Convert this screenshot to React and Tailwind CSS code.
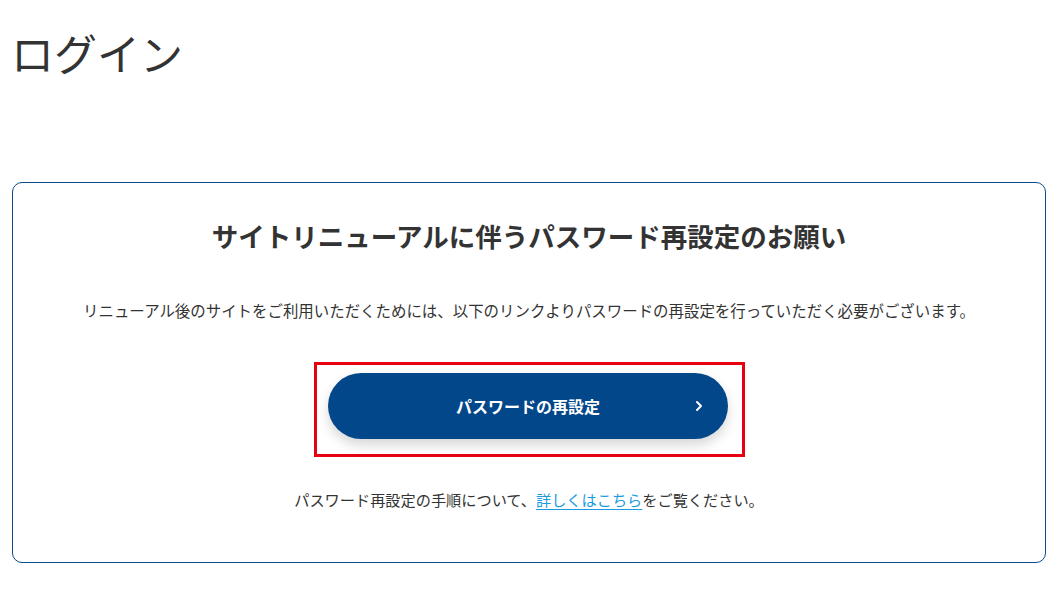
export default function App() {
  const font = { fontFamily: '"Noto Sans CJK JP", "Noto Sans", sans-serif' };
  return (
    <div className="w-[1058px] h-[599px] bg-white text-[#333333] overflow-hidden" style={font}>
      <div className="px-3">
        <h1 className="pt-[19px] pb-[3px] -ml-[1px] text-[43px] leading-[66px] font-normal">ログイン</h1>
        <div className="mt-[94px] h-[381px] border border-[#0b4a8b] rounded-[10px] flex flex-col items-center">
          <h2 className="mt-[33px] text-[26.5px] leading-[39px] font-bold">サイトリニューアルに伴うパスワード再設定のお願い</h2>
          <p className="mt-[43px] text-[15.45px] leading-[24px]">リニューアル後のサイトをご利用いただくためには、以下のリンクよりパスワードの再設定を行っていただく必要がございます。</p>
          <div className="mt-[40px] ml-[1px] w-[431px] h-[95px] border-[3px] border-[#e60012] pl-[11px] pt-[8px]">
            <button className="relative w-[400px] h-[66px] rounded-full bg-[#03478b] text-white text-[16px] font-bold shadow-[0_6px_12px_rgba(0,0,0,0.16)] flex items-center justify-center">
              <span>パスワードの再設定</span>
              <svg className="absolute right-[24px] top-1/2 -translate-y-1/2" width="10" height="14" viewBox="0 0 10 14" fill="none">
                <path d="M3 3 L7 7 L3 11" stroke="white" strokeWidth="2" strokeLinecap="round" strokeLinejoin="round" />
              </svg>
            </button>
          </div>
          <p className="mt-[30px] text-[15.2px] leading-[24px]">
            パスワード再設定の手順について、<a href="#" className="text-[#1a9be0] underline underline-offset-[3px]">詳しくはこちら</a>をご覧ください。
          </p>
        </div>
      </div>
    </div>
  );
}
